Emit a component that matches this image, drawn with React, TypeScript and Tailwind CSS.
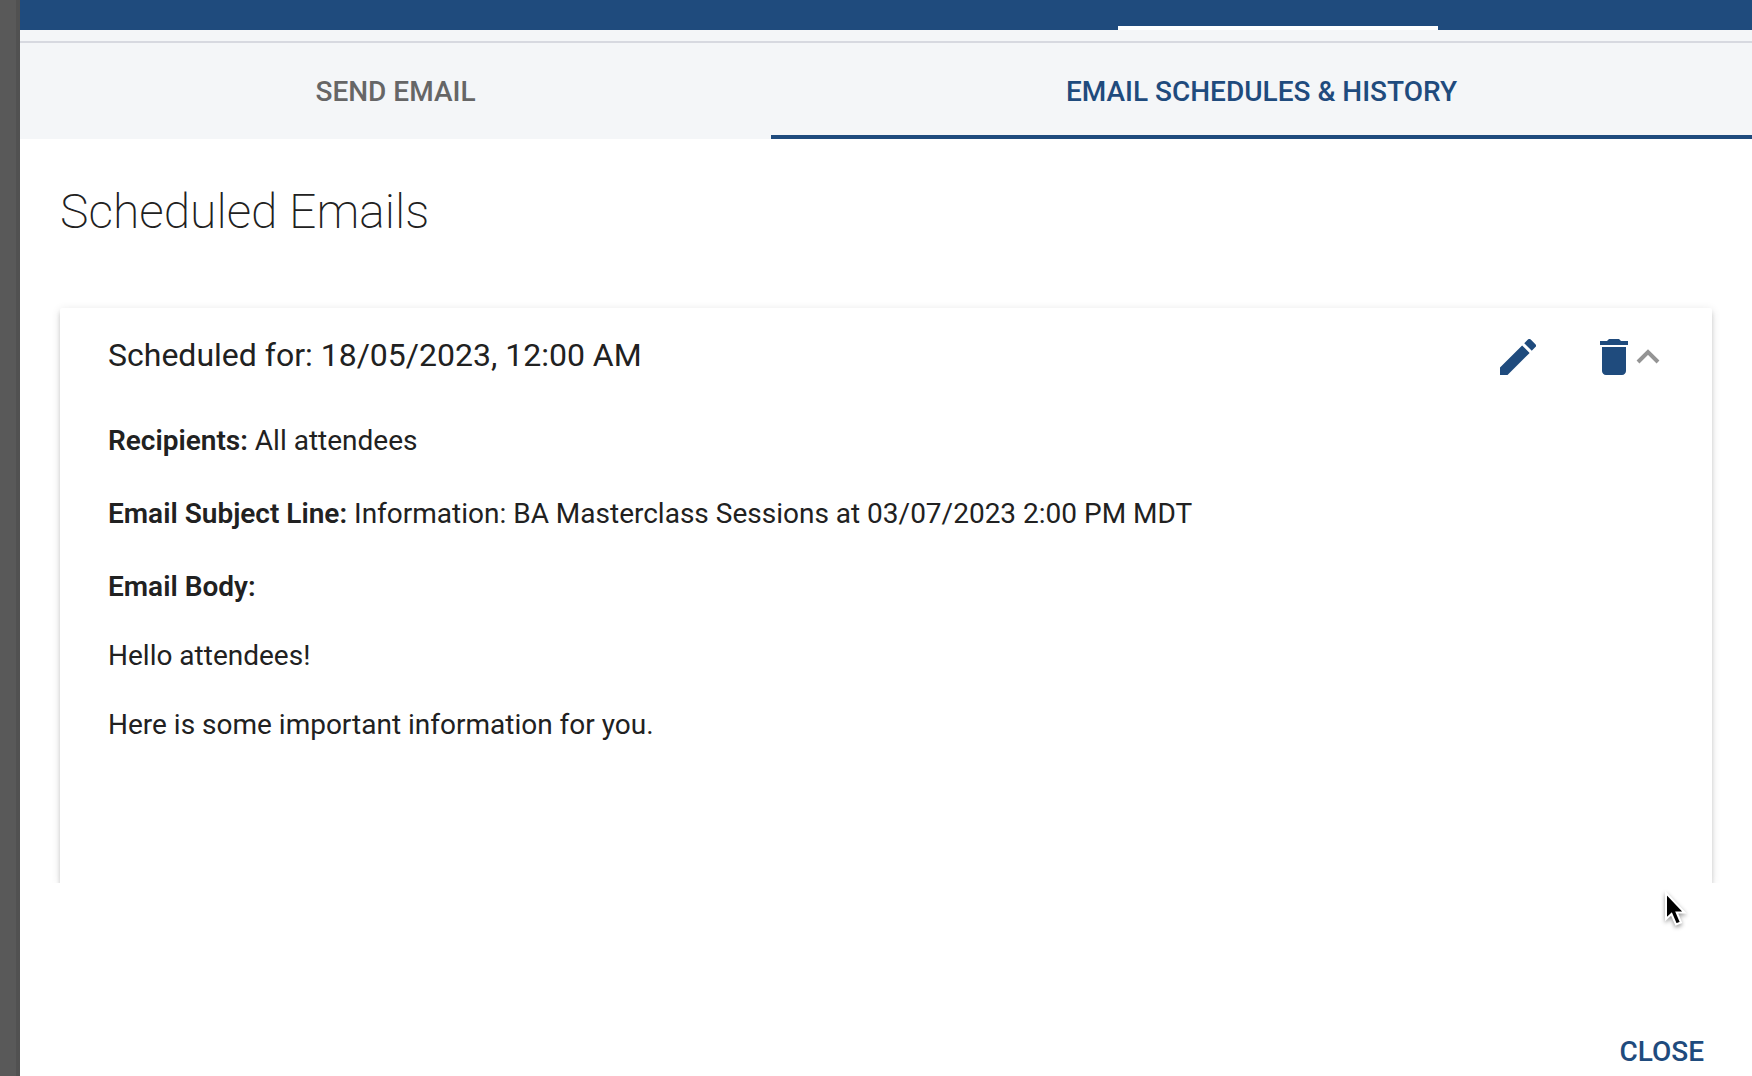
import { useState } from "react";

const details = [
  { label: "Recipients:", value: "All attendees" },
  {
    label: "Email Subject Line:",
    value: "Information: BA Masterclass Sessions at 03/07/2023 2:00 PM MDT",
  },
  { label: "Email Body:", value: "" },
];

const bodyLines = ["Hello attendees!", "Here is some important information for you."];

function PencilIcon() {
  return (
    <svg viewBox="3 3 18 18" className="h-9 w-9" fill="currentColor" aria-hidden="true">
      <path d="M3 17.25V21h3.75L17.81 9.94l-3.75-3.75L3 17.25zM20.71 7.04a1 1 0 0 0 0-1.41l-2.34-2.34a1 1 0 0 0-1.41 0l-1.83 1.83 3.75 3.75 1.83-1.83z" />
    </svg>
  );
}

function TrashIcon() {
  return (
    <svg viewBox="5 3 14 18" className="h-9 w-7" fill="currentColor" aria-hidden="true">
      <path d="M6 19c0 1.1.9 2 2 2h8c1.1 0 2-.9 2-2V7H6v12zM19 4h-3.5l-1-1h-5l-1 1H5v2h14V4z" />
    </svg>
  );
}

function ChevronIcon() {
  return (
    <svg viewBox="0 0 24 16" className="h-4 w-6" fill="none" aria-hidden="true">
      <path d="M2 13 12 3 22 13" stroke="currentColor" strokeWidth="4" />
    </svg>
  );
}

function Cursor() {
  return (
    <svg
      viewBox="0 0 26 40"
      className="pointer-events-none absolute top-[891px] right-[62px] h-10 w-[26px] drop-shadow-[0_2px_2px_rgba(0,0,0,0.4)]"
      aria-hidden="true"
    >
      <path
        d="M2 2V28L7.500 23 12 33.500 17 31.500 12.700 21.500H20.500L2 2Z"
        fill="#000"
        stroke="#fff"
        strokeWidth="2"
      />
    </svg>
  );
}

function ScheduledEmail() {
  const [open, setOpen] = useState(true);

  return (
    <section className="grow rounded-t-xs bg-white text-[#212121] shadow-[0_6px_2px_-4px_rgba(0,0,0,0.2),0_4px_4px_rgba(0,0,0,0.14),0_2px_10px_rgba(0,0,0,0.12)]">
      <header className="flex h-24 items-center pt-0.5 pr-[52px] pl-12">
        <h2 className="grow pb-1 text-[32px] leading-10">Scheduled for: 18/05/2023, 12:00 AM</h2>
        <button type="button" aria-label="Edit" className="mr-16 text-[#1f4b7d]">
          <PencilIcon />
        </button>
        <button type="button" aria-label="Delete" className="mr-2 text-[#1f4b7d]">
          <TrashIcon />
        </button>
        <button
          type="button"
          aria-label="Toggle details"
          aria-expanded={open}
          onClick={() => setOpen(!open)}
          className="text-[#949494]"
        >
          <ChevronIcon />
        </button>
      </header>
      {open ? (
        <div className="px-12 pt-[17px] text-[28px] leading-10">
          {details.map((row) => (
            <p key={row.label} className="mb-[33px]">
              <strong className="font-semibold">{row.label}</strong> {row.value}
            </p>
          ))}
          <div className="-mt-1 space-y-[29px]">
            {bodyLines.map((line) => (
              <p key={line}>{line}</p>
            ))}
          </div>
        </div>
      ) : null}
    </section>
  );
}

export default function App() {
  return (
    <div className="relative flex min-h-screen border-l-16 border-[#595959] bg-white font-['Roboto',sans-serif]">
      <div className="w-1 shrink-0 bg-[#515151]" />
      <main className="flex min-w-0 grow flex-col">
        <div className="grid h-[30px] grid-cols-[1098fr_320fr_314fr] items-end bg-[#1f4b7d]">
          <div className="col-start-2 h-1 bg-white" />
        </div>
        <div className="h-[13px] border-b-2 border-[#d7d9e0] bg-[#f4f6f8]" />
        <div
          role="tablist"
          className="grid h-24 grid-cols-[751fr_981fr] bg-[#f4f6f8] text-[28px] font-medium"
        >
          <button type="button" role="tab" aria-selected="false" className="pt-0.5 text-[#666666]">
            SEND EMAIL
          </button>
          <button
            type="button"
            role="tab"
            aria-selected="true"
            className="border-b-4 border-[#1f4b7d] pt-1.5 text-[#1f4b7d]"
          >
            EMAIL SCHEDULES &amp; HISTORY
          </button>
        </div>
        <div className="flex h-[744px] flex-col overflow-hidden px-10">
          <h1 className="mt-[41px] mb-16 text-5xl leading-16 font-extralight text-[#212121]">
            Scheduled Emails
          </h1>
          <ScheduledEmail />
        </div>
        <footer className="flex grow items-end justify-end px-12 pb-1">
          <button type="button" className="text-[28px] leading-10 font-medium text-[#1f4b7d]">
            CLOSE
          </button>
        </footer>
      </main>
      <Cursor />
    </div>
  );
}
